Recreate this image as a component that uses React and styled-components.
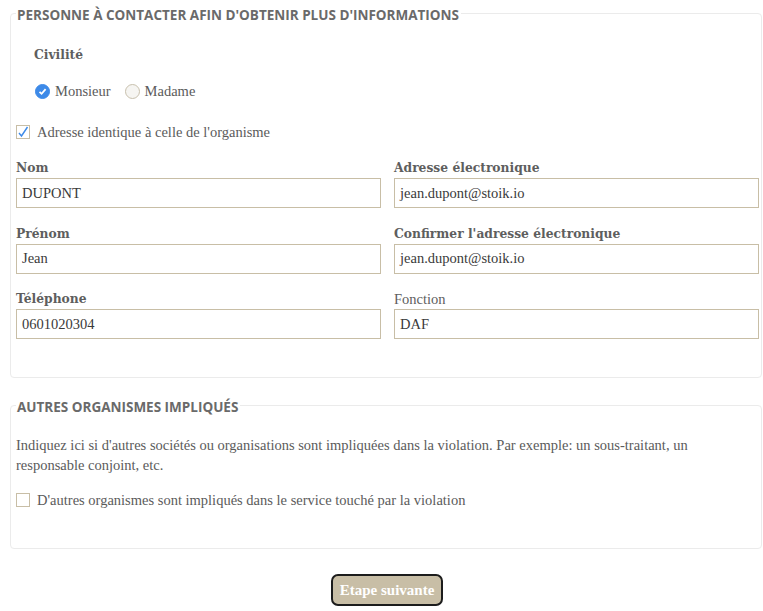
import React from "react";
import styled, { createGlobalStyle } from "styled-components";

const SERIF = `"Liberation Serif", Georgia, serif`;
const SERIF_BOLD = `"DejaVu Serif", Georgia, serif`;

const Global = createGlobalStyle`
  html, body { margin: 0; padding: 0; background: #fff; }
  body { font-family: ${SERIF}; color: #5b5b5b; }
  * { box-sizing: border-box; }
`;

const Page = styled.div`
  padding: 2px 1px 0 10px;
  width: 763px;
`;

const Fieldset = styled.fieldset`
  margin: 0 0 ${(p) => p.$gap || 0}px 0;
  border: 1px solid #ebebeb;
  border-radius: 4px;
  padding: 0 4px ${(p) => p.$pb}px 5px;
  min-width: 0;
`;

const Legend = styled.legend`
  font-family: "Open Sans", sans-serif;
  font-weight: 700;
  font-size: 13.5px;
  line-height: 18px;
  color: #6a6a6a;
  text-transform: uppercase;
  padding: 4px 2px 0 1px;
`;

const BoldText = styled.div`
  font-family: ${SERIF_BOLD};
  font-weight: 700;
  font-size: 12.3px;
  line-height: 18px;
  color: #5e5e5e;
`;

const GroupLabel = styled(BoldText)`
  padding-left: 18px;
  margin-top: 22px;
`;

const RadioRow = styled.div`
  display: flex;
  align-items: center;
  gap: 14px;
  padding-left: 19px;
  margin-top: 18px;
`;

const Choice = styled.label`
  display: flex;
  align-items: center;
  gap: 5px;
  font-size: 14.5px;
  line-height: 18px;
  color: #5b5b5b;
`;

const RadioDot = styled.span`
  width: 15px;
  height: 15px;
  border-radius: 50%;
  display: inline-flex;
  align-items: center;
  justify-content: center;
  background: ${(p) => (p.$on ? "#3d8ae8" : "#f6f5f2")};
  border: 1px solid ${(p) => (p.$on ? "#3d8ae8" : "#c8c0ad")};
`;

const Box = styled.span`
  width: 14px;
  height: 14px;
  border: 1px solid #c8bea6;
  background: #fff;
  display: inline-flex;
  align-items: flex-end;
  justify-content: center;
  flex: none;
`;

const CheckRow = styled.label`
  display: flex;
  align-items: center;
  gap: 7px;
  font-size: 14.5px;
  line-height: 18px;
  color: #5b5b5b;
  margin-top: ${(p) => p.$mt}px;
`;

const Grid = styled.div`
  display: grid;
  grid-template-columns: 365px 365px;
  column-gap: 13px;
  row-gap: 16.5px;
  margin-top: 18px;
`;

const Field = styled.div`
  display: flex;
  flex-direction: column;
`;

const FieldLabel = styled(BoldText)`
  margin-bottom: 1px;
`;

const LightLabel = styled.div`
  font-size: 14.5px;
  line-height: 18px;
  color: #5e5e5e;
  margin-bottom: 1px;
`;

const Input = styled.div`
  height: 30px;
  border: 1px solid #c8bea6;
  padding: 0 5px;
  display: flex;
  align-items: center;
  font-size: 14.5px;
  color: #3a3a3a;
  background: #fff;
`;

const Para = styled.p`
  margin: 19px 0 0 0;
  font-size: 14.5px;
  line-height: 20px;
  color: #5b5b5b;
`;

const Footer = styled.div`
  display: flex;
  justify-content: center;
  padding: 25px 0 4px 0;
`;

const Button = styled.button`
  font-family: ${SERIF};
  font-size: 15px;
  font-weight: 700;
  color: #fff;
  background: #c8bea6;
  border: 2px solid #1c1c1c;
  border-radius: 7px;
  height: 32px;
  padding: 0 7px;
  margin-left: 2px;
`;

const Check = () => (
  <svg width="12" height="12" viewBox="0 0 12 12">
    <path d="M2 7 L4.5 10 L10.5 1" fill="none" stroke="#3d8ae8" strokeWidth="1.4" />
  </svg>
);

const RadioCheck = () => (
  <svg width="9" height="9" viewBox="0 0 9 9">
    <path d="M1.5 4.8 L3.6 6.8 L7.6 2.2" fill="none" stroke="#fff" strokeWidth="1.8" />
  </svg>
);

const fields = [
  { l: "Nom", v: "DUPONT" },
  { l: "Adresse électronique", v: "jean.dupont@stoik.io" },
  { l: "Prénom", v: "Jean" },
  { l: "Confirmer l'adresse électronique", v: "jean.dupont@stoik.io" },
  { l: "Téléphone", v: "0601020304" },
  { l: "Fonction", v: "DAF", light: true },
];

export default function App() {
  return (
    <>
      <Global />
      <Page>
        <Fieldset $pb={38} $gap={16}>
          <Legend>Personne à contacter afin d'obtenir plus d'informations</Legend>
          <GroupLabel>Civilité</GroupLabel>
          <RadioRow>
            <Choice>
              <RadioDot $on>
                <RadioCheck />
              </RadioDot>
              Monsieur
            </Choice>
            <Choice>
              <RadioDot />
              Madame
            </Choice>
          </RadioRow>
          <CheckRow $mt={23}>
            <Box>
              <Check />
            </Box>
            Adresse identique à celle de l'organisme
          </CheckRow>
          <Grid>
            {fields.map((f) => (
              <Field key={f.l}>
                {f.light ? <LightLabel>{f.l}</LightLabel> : <FieldLabel>{f.l}</FieldLabel>}
                <Input>{f.v}</Input>
              </Field>
            ))}
          </Grid>
        </Fieldset>
        <Fieldset $pb={39}>
          <Legend>Autres organismes impliqués</Legend>
          <Para>
            Indiquez ici si d'autres sociétés ou organisations sont impliquées dans la violation. Par
            exemple: un sous-traitant, un responsable conjoint, etc.
          </Para>
          <CheckRow $mt={16}>
            <Box />
            D'autres organismes sont impliqués dans le service touché par la violation
          </CheckRow>
        </Fieldset>
        <Footer>
          <Button>Etape suivante</Button>
        </Footer>
      </Page>
    </>
  );
}
